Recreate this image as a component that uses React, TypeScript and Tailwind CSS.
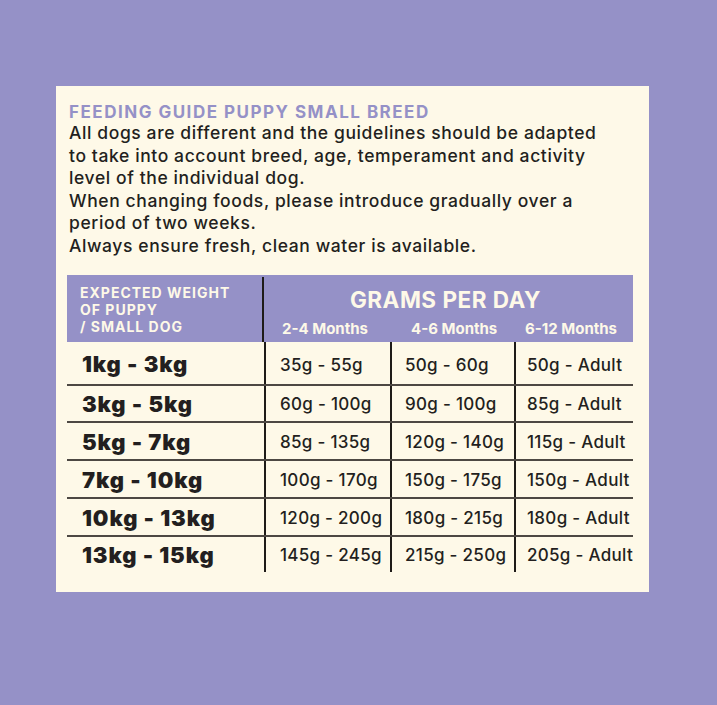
import React from "react";

const rows: [string, string, string, string][] = [
  ["1kg - 3kg", "35g - 55g", "50g - 60g", "50g - Adult"],
  ["3kg - 5kg", "60g - 100g", "90g - 100g", "85g - Adult"],
  ["5kg - 7kg", "85g - 135g", "120g - 140g", "115g - Adult"],
  ["7kg - 10kg", "100g - 170g", "150g - 175g", "150g - Adult"],
  ["10kg - 13kg", "120g - 200g", "180g - 215g", "180g - Adult"],
  ["13kg - 15kg", "145g - 245g", "215g - 250g", "205g - Adult"],
];

const heights = ["h-[44px]", "h-[37px]", "h-[38px]", "h-[38px]", "h-[38px]", "h-[29px]"];
const wpads = ["pt-[2px]", "pt-[2px]", "pt-[2px]", "pt-[2px]", "pt-[2px]", "pt-[2px]"];
const vpads = ["pt-[6px]", "pt-[3px]", "pt-[3px]", "pt-[3px]", "pt-[3px]", "pt-[3px]"];

export default function App() {
  return (
    <div className="w-[717px] h-[705px] bg-[#9591c7] pt-[86px] pl-[56px]" style={{ fontFamily: "Inter, 'Noto Sans', sans-serif" }}>
      <div className="w-[593px] h-[506px] bg-[#fef9e8] pl-[11px] pt-[16px] text-[#231f20]">
        <div className="pl-[2px]">
          <h1 className="text-[17px] leading-[20px] font-bold text-[#9591c7] tracking-[1.5px]">
            FEEDING GUIDE PUPPY SMALL BREED
          </h1>
          <div className="text-[17.5px] leading-[22.5px] font-medium tracking-[0.6px]">
            <p>All dogs are different and the guidelines should be adapted</p>
            <p>to take into account breed, age, temperament and activity</p>
            <p>level of the individual dog.</p>
            <p>When changing foods, please introduce gradually over a</p>
            <p>period of two weeks.</p>
            <p>Always ensure fresh, clean water is available.</p>
          </div>
        </div>

        <div className="mt-[18px] w-[566px]">
          <div className="flex h-[67px] bg-[#9591c7] text-[#fef9e8]">
            <div className="w-[195px] pl-[13px] pt-[10px] text-[14px] leading-[16.8px] tracking-[1px] font-bold">
              <div>EXPECTED WEIGHT</div>
              <div>OF PUPPY</div>
              <div>/ SMALL DOG</div>
            </div>
            <div className="w-[2px] mt-[2px] bg-[#1e1b18]" />
            <div className="flex-1 flex flex-col">
              <div className="text-center text-[22.5px] leading-[26px] pt-[12px] pr-[6px] tracking-[0.5px] font-bold">GRAMS PER DAY</div>
              <div className="grid grid-cols-[126px_124px_117px] text-[15px] leading-[18px] mt-[7px] font-bold">
                <div className="pl-[18px]">2-4 Months</div>
                <div className="pl-[21px]">4-6 Months</div>
                <div className="pl-[11px]">6-12 Months</div>
              </div>
            </div>
          </div>
          {rows.map((r, i) => (
            <div
              key={i}
              className={`grid grid-cols-[197px_126px_124px_119px] ${heights[i]} ${i < rows.length - 1 ? "border-b-2 border-[#4d4843]" : ""}`}
            >
              <div className={`flex items-center pl-[15px] ${wpads[i]} text-[22px] font-black tracking-[0.9px] whitespace-nowrap`}>{r[0]}</div>
              <div className={`flex items-center pl-[14px] ${vpads[i]} border-l-2 border-[#1e1b18] text-[17px] font-medium tracking-[0.3px] whitespace-nowrap`}>{r[1]}</div>
              <div className={`flex items-center pl-[13px] ${vpads[i]} border-l-2 border-[#1e1b18] text-[17px] font-medium tracking-[0.3px] whitespace-nowrap`}>{r[2]}</div>
              <div className={`flex items-center pl-[11px] ${vpads[i]} border-l-2 border-[#1e1b18] text-[17px] font-medium tracking-[0.3px] whitespace-nowrap`}>{r[3]}</div>
            </div>
          ))}
        </div>
      </div>
    </div>
  );
}
